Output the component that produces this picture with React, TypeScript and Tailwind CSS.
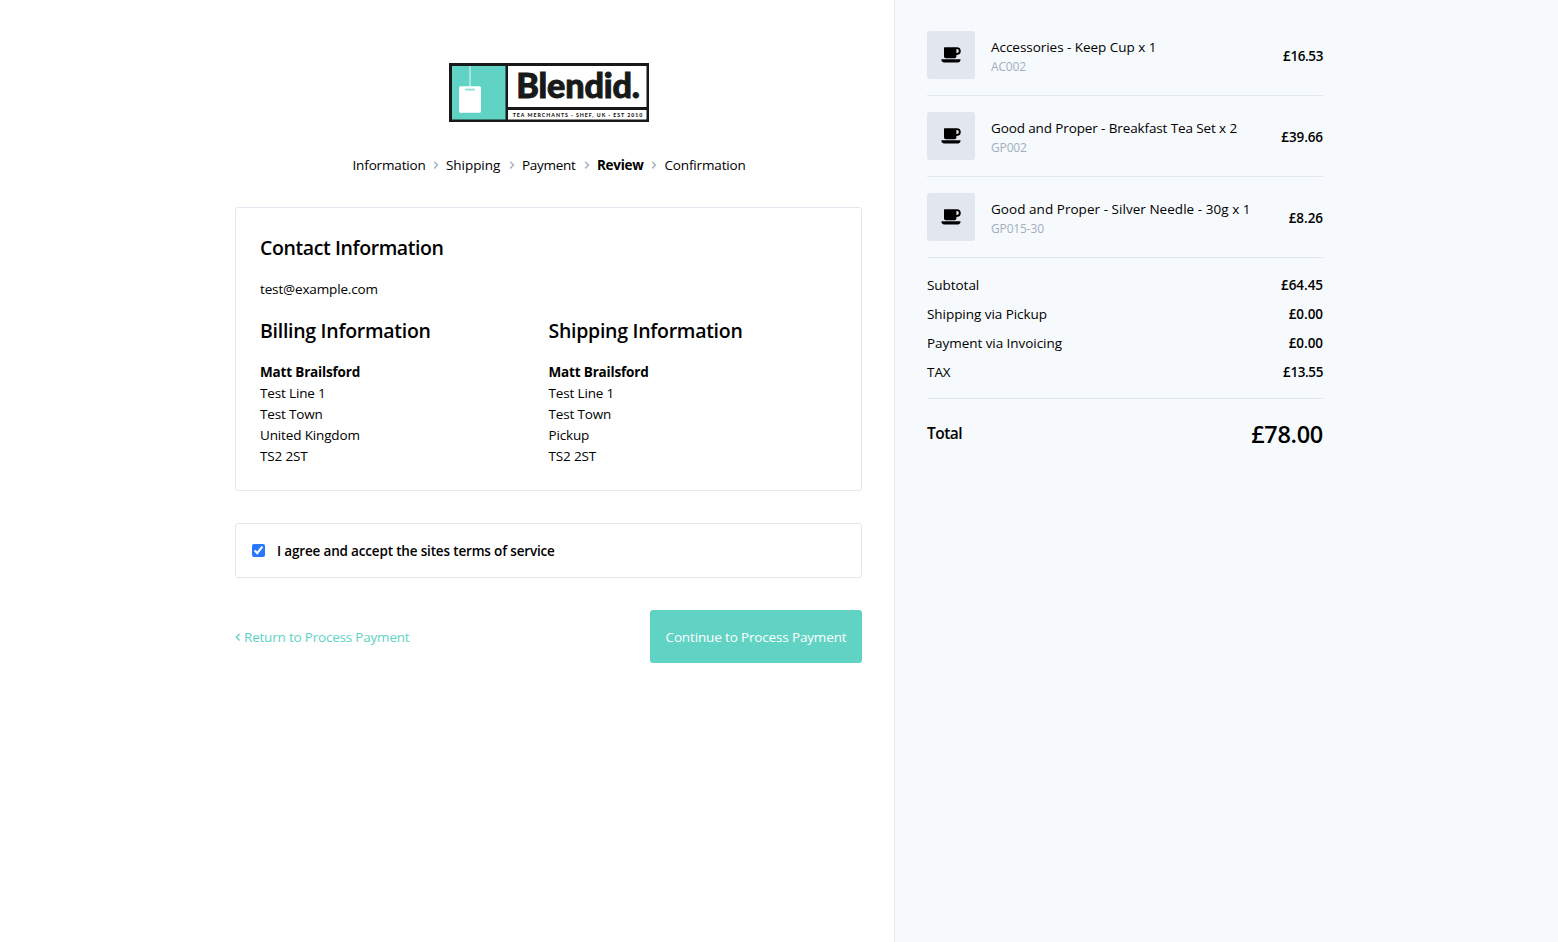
import type { ReactNode } from "react";

const AngleRight = () => (
  <svg viewBox="0 0 6 14" className="h-[14px] w-[6px] shrink-0 fill-none stroke-[#a8b5c4]" strokeWidth="1.5">
    <path d="M1.2 3.8 L4.5 7.1 L1.2 10.4" />
  </svg>
);

const Coffee = () => (
  <svg viewBox="0 0 20 16" className="h-4 w-5 fill-black">
    <path
      fillRule="evenodd"
      d="M3.6 0.2 H15.9 A3.85 3.85 0 0 1 15.9 7.9 H15.4 V9.4 A1.8 1.8 0 0 1 13.6 11.2 H4.8 A1.8 1.8 0 0 1 3 9.4 V0.8 Q3 0.2 3.6 0.2 Z M15.4 2.1 V6 H15.9 A1.95 1.95 0 0 0 15.9 2.1 Z"
    />
    <path d="M0.5 12.3 H19.4 C20 13.8 18.8 15.4 17.2 15.4 H2.8 C1.2 15.4 0 13.8 0.5 12.3 Z" />
  </svg>
);

const Logo = () => (
  <svg viewBox="0 0 200 59" className="h-[59px] w-[200px]">
    <rect width="200" height="59" fill="#181919" />
    <rect x="3" y="3" width="53.5" height="53.5" fill="#60d3c4" />
    <rect x="59" y="3" width="138.5" height="41" fill="#fff" />
    <rect x="59" y="47" width="138.5" height="9.5" fill="#fff" />
    <rect x="20.3" y="3" width="1.5" height="21" fill="#b9ece6" />
    <rect x="10" y="23.3" width="22" height="26.5" rx="1.6" fill="#fff" />
    <rect x="16" y="25.8" width="10" height="1.7" rx="0.8" fill="#8ce0d5" />
    <text x="67.3" y="35.4" textLength="123.5" lengthAdjust="spacingAndGlyphs" fontSize="33.5" fontWeight="900" fill="#181919" stroke="#181919" strokeWidth="0.9" className="font-['Lato',sans-serif]">Blendid.</text>
    <text x="63.7" y="54" textLength="129.5" fontSize="5.2" fontWeight="900" fill="#181919" className="font-['Lato',sans-serif]">TEA MERCHANTS · SHEF, UK · EST 2010</text>
  </svg>
);

const Step = ({ children, className }: { children: ReactNode; className: string }) => (
  <span className={`pt-[2px] whitespace-nowrap ${className}`}>{children}</span>
);

const items = [
  { name: "Accessories - Keep Cup x 1", sku: "AC002", price: "£16.53", spacing: "tracking-[-0.04px]", priceSpacing: "tracking-[-0.4px]" },
  { name: "Good and Proper - Breakfast Tea Set x 2", sku: "GP002", price: "£39.66", spacing: "tracking-[-0.12px]", priceSpacing: "tracking-[-0.1px]" },
  { name: "Good and Proper - Silver Needle - 30g x 1", sku: "GP015-30", price: "£8.26", spacing: "tracking-[0.04px]", priceSpacing: "tracking-[-0.05px]" },
];

const totals = [
  { label: "Subtotal", value: "£64.45", spacing: "tracking-[-0.05px]" },
  { label: "Shipping via Pickup", value: "£0.00", spacing: "tracking-[-0.05px]" },
  { label: "Payment via Invoicing", value: "£0.00", spacing: "tracking-[-0.05px]" },
  { label: "TAX", value: "£13.55", spacing: "tracking-[-0.4px]" },
];

const Address = ({ title, lines }: { title: string; lines: string[] }) => (
  <div className="w-1/2">
    <h2 className="mb-[19px] text-[19.5px] leading-[25px] font-semibold tracking-[-0.28px]">{title}</h2>
    <p className="font-bold tracking-[-0.17px]">Matt Brailsford</p>
    {lines.map((line) => (
      <p key={line}>{line}</p>
    ))}
  </div>
);

export default function App() {
  return (
    <div className="flex h-[942px] overflow-hidden bg-white font-['Open_Sans','Noto_Sans',sans-serif] text-[13.5px] leading-[21px] tracking-[-0.15px] text-black">
      <main className="flex w-[894px] shrink-0 flex-col pt-[63px] pr-8 pl-[235px]">
        <div className="flex justify-center">
          <Logo />
        </div>
        <nav className="mt-8 flex h-[21px] items-center justify-center gap-[7.5px]">
          <Step className="w-[72.5px]">Information</Step>
          <AngleRight />
          <Step className="w-[55px] tracking-[-0.05px]">Shipping</Step>
          <AngleRight />
          <Step className="w-[54px] tracking-[-0.3px]">Payment</Step>
          <AngleRight />
          <Step className="w-[46.5px] font-bold tracking-[-0.3px]">Review</Step>
          <AngleRight />
          <Step className="w-[80px]">Confirmation</Step>
        </nav>
        <section className="mt-8 h-[284px] rounded-[3px] border border-[#e2e8f0] px-6 pt-[27px]">
          <h2 className="mb-[19px] text-[19.5px] leading-[25px] font-semibold tracking-[-0.4px]">Contact Information</h2>
          <p>test@example.com</p>
          <div className="mt-[18px] flex">
            <Address title="Billing Information" lines={["Test Line 1", "Test Town", "United Kingdom", "TS2 2ST"]} />
            <Address title="Shipping Information" lines={["Test Line 1", "Test Town", "Pickup", "TS2 2ST"]} />
          </div>
        </section>
        <label className="mt-8 flex h-[55px] items-center rounded-[3px] border border-[#e2e8f0] px-4 font-semibold">
          <input type="checkbox" defaultChecked className="mr-3 h-[13px] w-[13px] accent-[#2878ff]" />
          <span className="pt-[2px] tracking-[-0.17px]">I agree and accept the sites terms of service</span>
        </label>
        <div className="mt-8 flex items-center justify-between">
          <a className="flex items-center gap-[3px] text-[#60d3c4]">
            <svg viewBox="0 0 6 14" className="h-[14px] w-[6px] fill-none stroke-[#60d3c4]" strokeWidth="1.4">
              <path d="M4.6 4 L1.4 7.2 L4.6 10.4" />
            </svg>
            <span className="pt-[2px] tracking-[-0.2px]">Return to Process Payment</span>
          </a>
          <button className="h-[53px] w-[212px] rounded-[3px] bg-[#60d3c4] pt-[2px] whitespace-nowrap text-white">Continue to Process Payment</button>
        </div>
      </main>
      <aside className="grow border-l border-[#e2e8f0] bg-[#f7fafc] pt-[31px] pl-8">
        <div className="w-[396px]">
          {items.map((item) => (
            <div key={item.sku} className="mb-4 flex items-center border-b border-[#e2e8f0] pb-4">
              <div className="flex h-12 w-12 items-center justify-center rounded-[3px] bg-[#e2e6ef]">
                <Coffee />
              </div>
              <div className="ml-4 grow pt-[2px]">
                <p className={item.spacing}>{item.name}</p>
                <p className="text-[12px] leading-[18px] text-[#a0aec0]">{item.sku}</p>
              </div>
              <span className={`pt-[2px] font-semibold ${item.priceSpacing}`}>{item.price}</span>
            </div>
          ))}
          <div className="flex flex-col gap-2 border-b border-[#e2e8f0] pt-px pb-[15px]">
            {totals.map((row) => (
              <div key={row.label} className="flex justify-between">
                <span className="tracking-[-0.05px]">{row.label}</span>
                <span className={`font-semibold ${row.spacing}`}>{row.value}</span>
              </div>
            ))}
          </div>
          <div className="mt-4 flex h-[38px] items-center justify-between">
            <span className="pb-px text-[15.5px] font-semibold tracking-[-0.5px]">Total</span>
            <span className="text-[23.5px] font-semibold tracking-[-0.3px]">£78.00</span>
          </div>
        </div>
      </aside>
    </div>
  );
}
